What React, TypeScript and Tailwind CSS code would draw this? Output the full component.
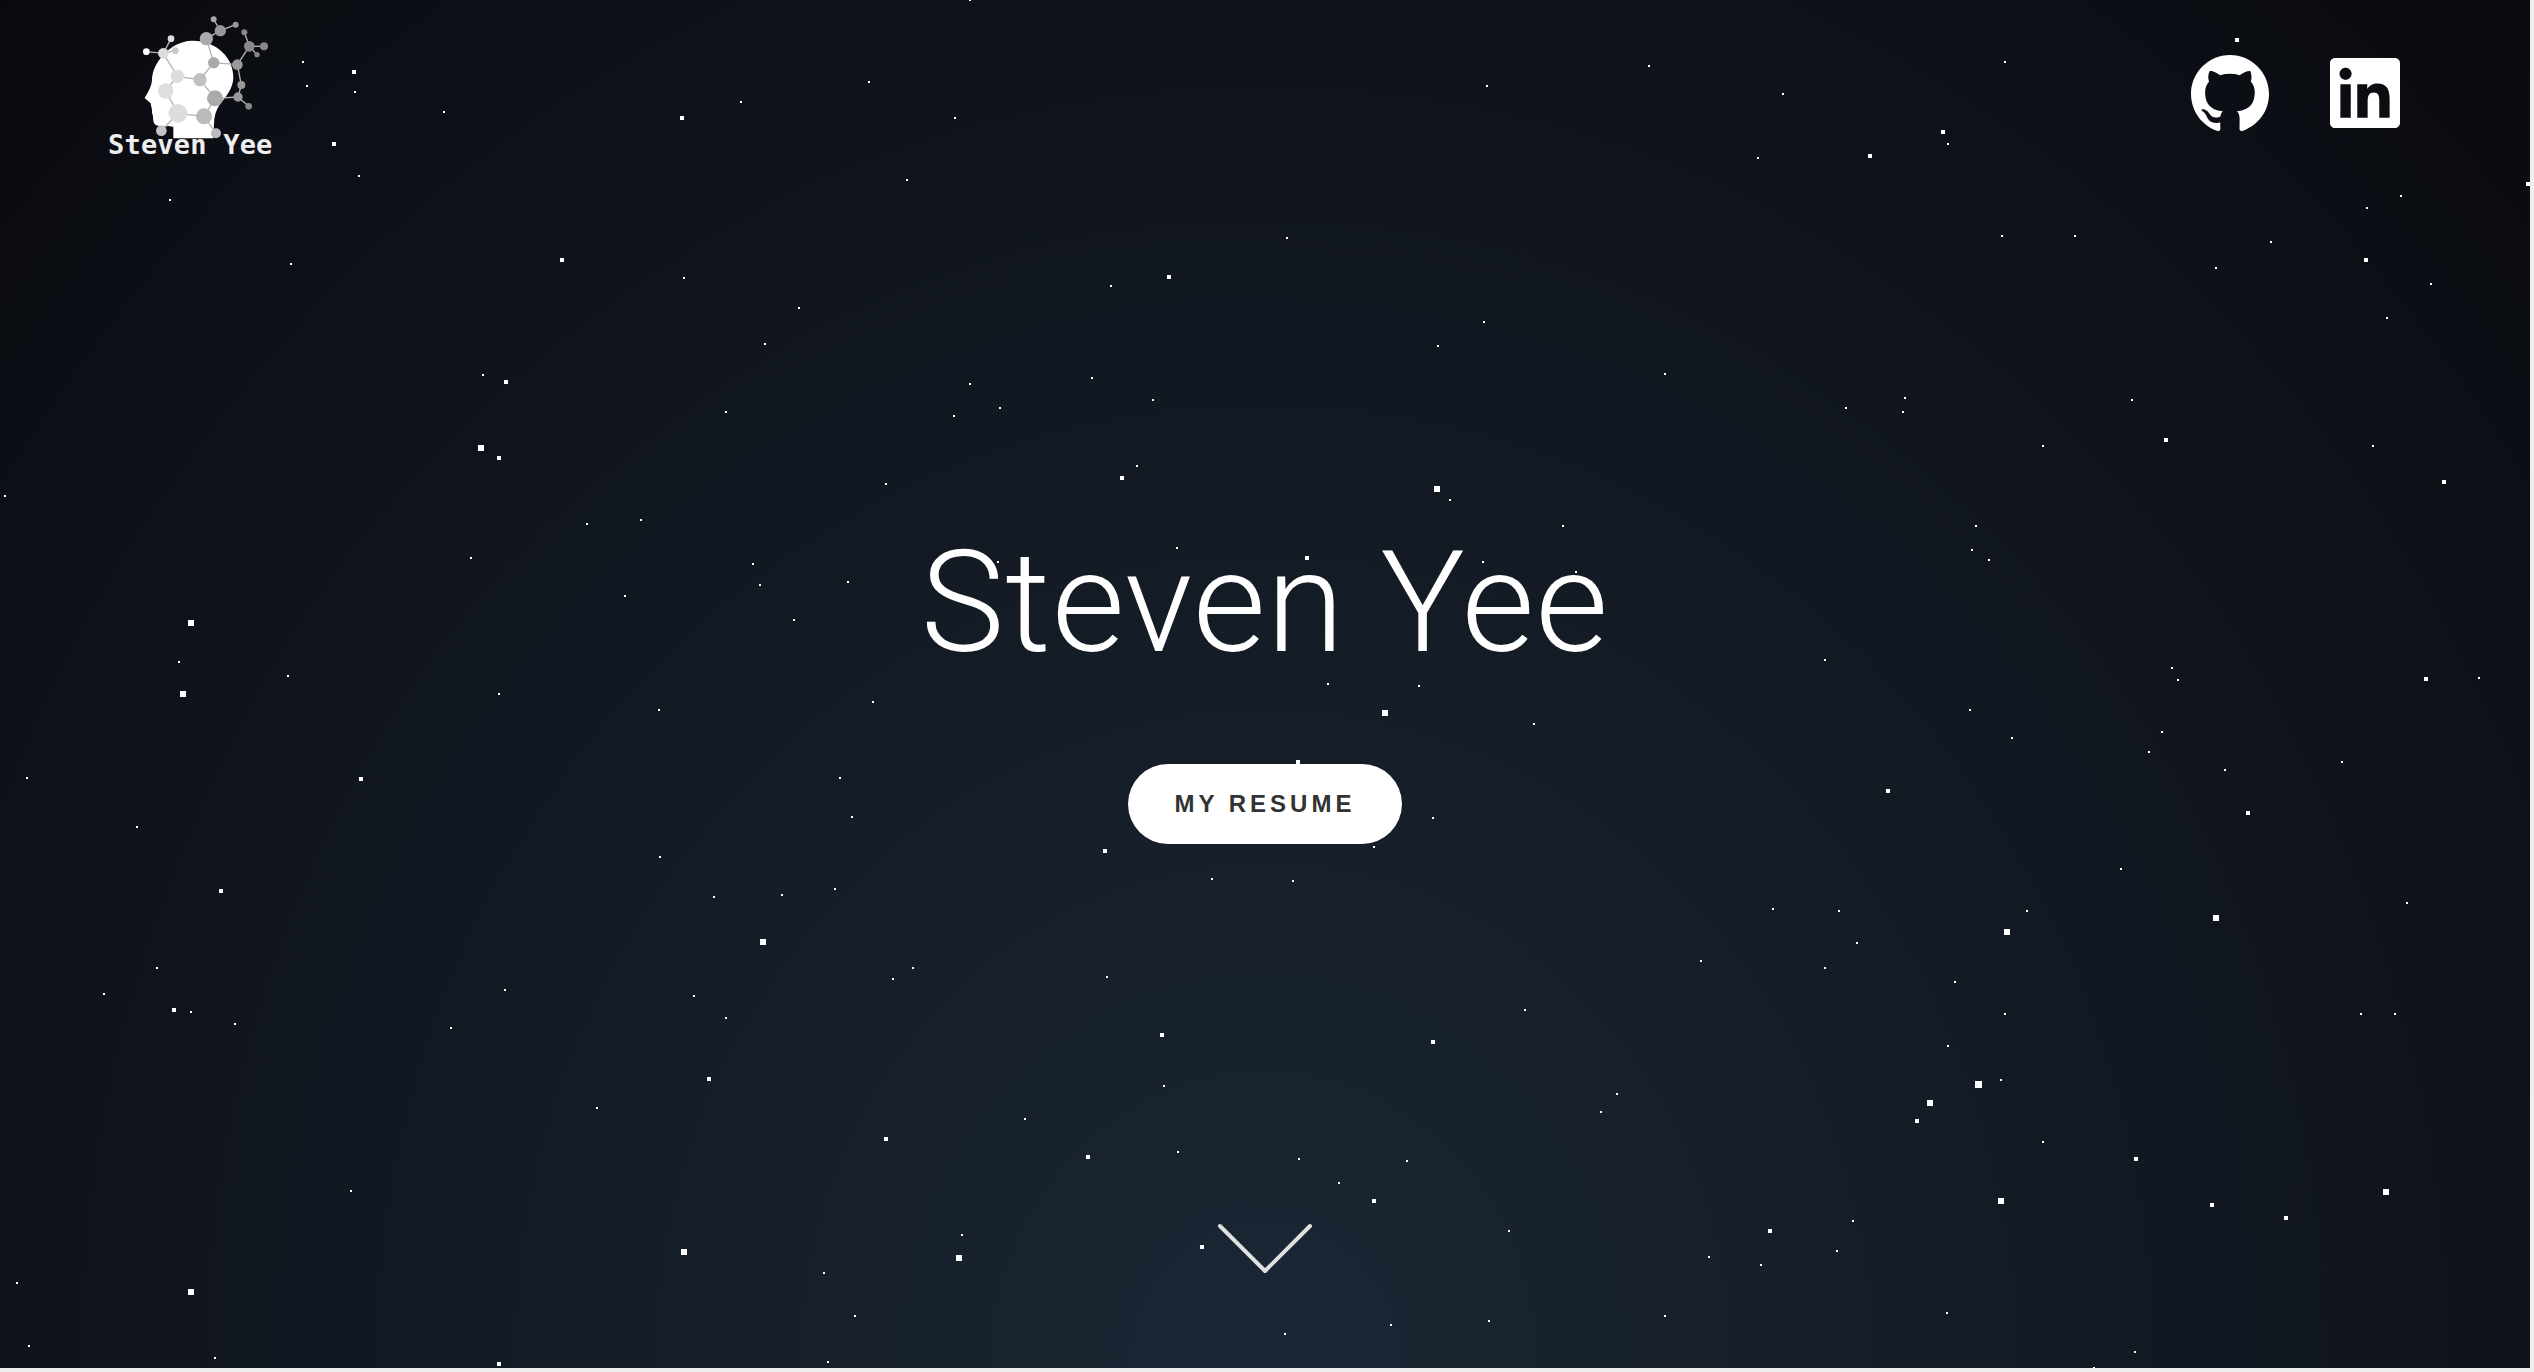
import { SiGithub, SiLinkedin } from 'react-icons/si';

type Star = [number, number, number];

// star positions (centres), read off per quadrant of the page
const topLeft: Star[] = [
  [375,141,2],[438,165,4],[380,196,2],[439,210,2],[550,256,2],[413,330,4],[444,402,2],[211,457,2],[360,603,2],[695,595,4],[847,635,2],[989,703,2],[947,786,2],[598,858,2],[626,874,4],[899,941,2],[595,1025,6],[618,1047,4],[6,1133,2],[726,1197,2],[793,1188,2],[583,1275,2],[932,1288,2],[941,1338,2],[1050,1330,2],[773,1362,2],[983,1416,2],[236,1423,6],[221,1513,2],[357,1545,2],[1075,187,2],[917,233,2],[844,270,4],[1182,269,2],[1122,411,2],[1201,0,2],[1447,632,4],[1375,653,2],[1352,864,2],[1201,877,2],[1427,914,2],[1238,932,2],[1181,951,2],[1407,1065,2],[1388,1093,4],[1097,1106,2],[1456,1252,2],[1235,1285,2],
];
const topRight: Star[] = [
  [1200,92,4],[913,141,2],[473,151,2],[272,196,2],[638,214,2],[837,302,4],[843,328,2],[608,361,2],[746,357,4],[1560,421,4],[1403,448,2],[1361,475,2],[25,544,2],[910,539,2],[1000,539,2],[1242,552,2],[1360,595,4],[1175,612,2],[1440,649,2],[1386,727,2],[269,736,2],[212,791,2],[492,855,2],[789,909,2],[717,932,2],[787,941,2],[1071,914,2],[1112,1006,4],[960,1019,2],[1369,1019,2],[1456,1102,4],[210,1117,6],[227,1142,2],[366,1202,2],[878,1202,2],[873,1257,2],[893,1279,2],[50,1276,4],[267,1284,2],[383,1307,2],[200,1376,2],[690,1508,2],[1120,1527,2],[1128,1554,2],[1434,1551,4],[1500,1549,2],[76,1563,2],[188,1567,2],
];
const bottomLeft: Star[] = [
  [226,19,6],[617,18,2],[815,55,2],[1080,36,2],[33,210,2],[447,211,4],[1040,210,2],[169,320,2],[1055,297,2],[817,388,2],[274,467,4],[1033,461,2],[968,475,2],[884,480,2],[944,582,6],[1368,376,4],[1500,439,2],[194,640,2],[1130,640,2],[1105,667,2],[1370,662,2],[129,699,2],[625,690,2],[859,704,2],[215,737,4],[236,740,2],[291,768,2],[899,754,2],[558,777,2],[1438,792,4],[878,892,4],[739,960,2],[1441,909,2],[1268,983,2],[1096,1029,4],[1346,1071,4],[1458,1060,2],[434,1147,2],[1191,1248,2],[847,1286,6],[1187,1299,6],[1487,1276,4],[1020,1335,2],[21,1357,2],[236,1377,6],[1058,1431,2],[36,1499,2],[266,1527,2],[618,1541,4],[1025,1536,2],
];
const bottomRight: Star[] = [
  [188,0,2],[146,61,6],[331,87,2],[870,55,2],[922,119,2],[1108,105,2],[1091,151,2],[1331,173,2],[1185,192,2],[768,238,4],[1214,289,4],[38,173,4],[205,301,2],[133,365,2],[32,443,2],[1057,416,2],[626,507,2],[708,512,2],[940,512,2],[1411,493,2],[1175,527,6],[916,559,6],[730,585,2],[537,626,2],[690,640,2],[851,672,2],[913,745,2],[1354,745,2],[1396,745,2],[319,736,2],[206,810,4],[843,818,2],[908,896,2],[880,906,7],[821,947,6],[433,928,2],[413,969,2],[805,988,4],[960,1037,2],[1075,1075,4],[39,1074,2],[173,1079,2],[89,1129,2],[1385,1149,6],[132,1171,4],[908,1171,6],[1169,1180,4],[1261,1208,4],[299,1239,2],[622,1239,4],[725,1216,2],[705,1284,2],[547,1298,2],[611,1316,2],[492,1431,2],[841,1426,2],[275,1444,2],[153,1453,2],[22,1472,2],[1074,1513,2],[1024,1549,2],[378,1554,2],[814,1557,2],
];

const place = (list: Star[], ox: number, oy: number, sy: number) =>
  list.map(([x, y, s]) => [Math.round(ox + (x * 1267) / 1568 - s / 2), Math.round(oy + y * sy - s / 2), s] as Star);

const stars: Star[] = [
  ...place(topLeft, 0, 0, 686 / 1568),
  ...place(topRight, 1267, 0, 686 / 1568),
  ...place(bottomLeft, 0, 686, 686 / 1559),
  ...place(bottomRight, 1267, 686, 686 / 1559),
];

const links = [
  'M199 155L250 160L273 116', 'M250 160L286 152', 'M250 160L292 229L257 273', 'M292 229L360 239L401 188L379 116L421 92L401 58', 'M421 92L467 74',
  'M401 188L472 194L508 139L493 97', 'M508 139L552 139', 'M508 139L531 164', 'M472 194L484 255L474 291L506 319', 'M474 291L405 295L360 239',
  'M405 295L372 349L294 340L257 273', 'M294 340L244 392', 'M372 349L408 400',
];

const nodes: [number, number, number, string][] = [
  [199,155,10,'#ffffff'],[273,116,10,'#dddddd'],[250,160,16,'#dcdcdc'],[286,152,10,'#c8c8c8'],[292,229,20,'#dddddd'],[257,273,23,'#dedede'],
  [360,239,20,'#c0c0c0'],[401,188,17,'#aaaaaa'],[379,116,20,'#aaaaaa'],[421,92,17,'#999999'],[401,58,9,'#a8a8a8'],[467,74,9,'#999999'],
  [493,97,9,'#888888'],[508,139,16,'#888888'],[552,139,12,'#888888'],[531,164,8,'#888888'],[472,194,16,'#999999'],[484,255,12,'#999999'],
  [474,291,14,'#999999'],[506,319,10,'#888888'],[405,295,24,'#aaaaaa'],[294,340,28,'#dddddd'],[372,349,24,'#bbbbbb'],[244,392,16,'#c4c4c4'],[408,400,15,'#bbbbbb'],
];

function Logo() {
  return (
    <div className="flex w-[240px] flex-col items-start">
      <svg viewBox="0 0 720 420" className="h-[140px] w-[240px]">
        <path
          d="M335 122C405 120 462 170 460 235C459 262 440 290 420 312C408 330 402 350 402 372L400 415L280 415L280 380C262 378 238 382 226 374C216 366 222 350 216 340C218 328 212 318 212 310L194 294C204 276 214 262 216 240C216 190 270 124 335 122Z"
          fill="#ffffff"
        />
        {links.map((d) => (
          <path key={d} d={d} fill="none" stroke="#b4b4b4" strokeWidth="4" />
        ))}
        {nodes.map(([cx, cy, r, fill]) => (
          <circle key={`${cx}-${cy}`} cx={cx} cy={cy} r={r} fill={fill} />
        ))}
      </svg>
      <span className="-mt-[9px] ml-[28px] font-['DejaVu_Sans_Mono',monospace] text-[27px] leading-[28px] font-bold tracking-[0.2px] whitespace-nowrap text-[#eeeeee]">
        Steven Yee
      </span>
    </div>
  );
}

export default function App() {
  return (
    <div className="h-screen bg-[#eeeeee]">
      <div className="relative flex h-[1368px] w-[2530px] flex-col overflow-hidden bg-[radial-gradient(ellipse_at_bottom,#1b2735_0%,#090a0f_100%)] font-['Liberation_Sans',sans-serif]">
        <div className="absolute inset-0">
          {stars.map(([x, y, s], i) => (
            <span key={i} className="absolute bg-white" style={{ left: x, top: y, width: s, height: s }} />
          ))}
        </div>

        <header className="relative flex h-[160px] items-start justify-between pr-[130px] pl-[80px]">
          <Logo />
          <nav className="mt-[54px] flex items-center gap-[61px] text-white">
            <SiGithub size={78} />
            <SiLinkedin size={70} />
          </nav>
        </header>

        <main className="relative flex flex-1 flex-col items-center pt-[373px]">
          <h1 className="font-['Roboto',sans-serif] text-[141px] leading-[140px] font-[350] tracking-[1px] whitespace-nowrap text-white">Steven Yee</h1>
          <button className="mt-[91px] h-20 rounded-full bg-white px-[47px] text-2xl font-bold tracking-[4px] text-[#333333]">MY RESUME</button>
        </main>

        <footer className="relative flex justify-center pb-[94px]">
          <svg viewBox="0 0 96 51" className="h-[51px] w-[96px]" fill="none" stroke="#e0e0e0" strokeWidth="4" strokeLinecap="round" strokeLinejoin="round">
            <path d="M3 3L48 48L93 3" />
          </svg>
        </footer>
      </div>
    </div>
  );
}
